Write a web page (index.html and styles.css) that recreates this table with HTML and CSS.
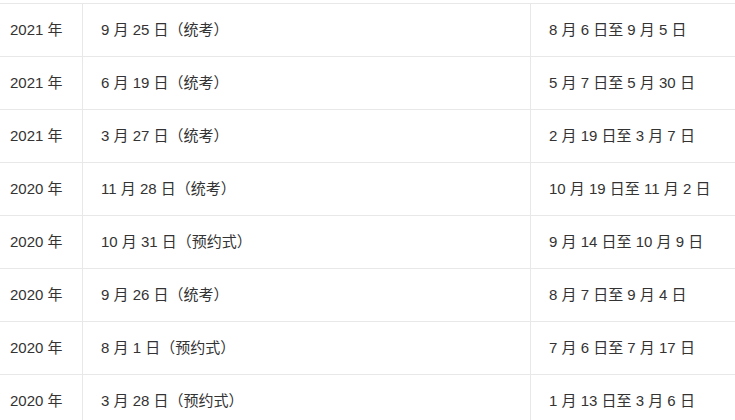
FILE: index.html
```html
<!DOCTYPE html>
<html lang="zh-CN">
<head>
<meta charset="utf-8">
<link rel="stylesheet" href="styles.css">
</head>
<body>
<table class="exam-table">
  <colgroup>
    <col class="c1">
    <col class="c2">
    <col class="c3">
  </colgroup>
  <tbody>
    <tr><td>2021 年</td><td>9 月 25 日（统考）</td><td>8 月 6 日至 9 月 5 日</td></tr>
    <tr><td>2021 年</td><td>6 月 19 日（统考）</td><td>5 月 7 日至 5 月 30 日</td></tr>
    <tr><td>2021 年</td><td>3 月 27 日（统考）</td><td>2 月 19 日至 3 月 7 日</td></tr>
    <tr><td>2020 年</td><td>11 月 28 日（统考）</td><td>10 月 19 日至 11 月 2 日</td></tr>
    <tr><td>2020 年</td><td>10 月 31 日（预约式）</td><td>9 月 14 日至 10 月 9 日</td></tr>
    <tr><td>2020 年</td><td>9 月 26 日（统考）</td><td>8 月 7 日至 9 月 4 日</td></tr>
    <tr><td>2020 年</td><td>8 月 1 日（预约式）</td><td>7 月 6 日至 7 月 17 日</td></tr>
    <tr><td>2020 年</td><td>3 月 28 日（预约式）</td><td>1 月 13 日至 3 月 6 日</td></tr>
  </tbody>
</table>
</body>
</html>
```

FILE: styles.css
```css
html, body {
  margin: 0;
  padding: 0;
  background: #fff;
  overflow: hidden;
}
body {
  font-family: "Liberation Sans", "Noto Sans CJK SC", sans-serif;
  font-size: 15px;
  color: #333;
}
.exam-table {
  border-collapse: collapse;
  table-layout: fixed;
  width: 745px;
  margin: 3px 0 0 -9px;
}
.c1 { width: 91px; }
.c2 { width: 448px; }
.c3 { width: 206px; }
.exam-table td {
  border: 1px solid #e8e8e8;
  height: 52px;
  box-sizing: border-box;
  padding: 0 0 0 18px;
  vertical-align: middle;
  white-space: nowrap;
  line-height: 20px;
  text-spacing-trim: space-all;
  font-feature-settings: "fwid" 1;
}
.exam-table tr { height: 53px; }
```
